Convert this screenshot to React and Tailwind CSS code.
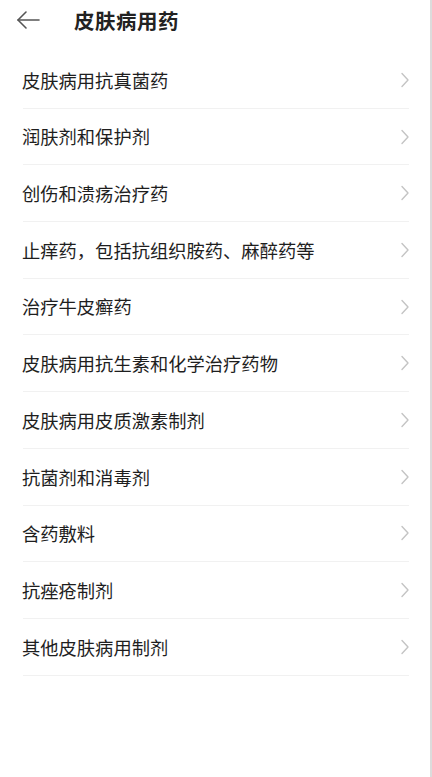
const items = [
  "皮肤病用抗真菌药",
  "润肤剂和保护剂",
  "创伤和溃疡治疗药",
  "止痒药，包括抗组织胺药、麻醉药等",
  "治疗牛皮癣药",
  "皮肤病用抗生素和化学治疗药物",
  "皮肤病用皮质激素制剂",
  "抗菌剂和消毒剂",
  "含药敷料",
  "抗痤疮制剂",
  "其他皮肤病用制剂",
];

const font = { fontFamily: '"Noto Sans CJK SC", "Noto Sans", sans-serif' };

export default function App() {
  return (
    <div
      className="h-[777px] w-[432px] overflow-hidden border-r-2 border-[#dcdcdc] bg-white text-[#222]"
      style={font}
    >
      <header className="flex h-[40px] items-center">
        <button className="ml-[15px] flex h-[26px] w-[26px] items-center justify-center text-[#555]">
          <svg width="24" height="24" viewBox="0 0 24 24" fill="none" stroke="currentColor" strokeWidth="1.6" strokeLinecap="round" strokeLinejoin="round">
            <path d="M23 12H2" />
            <path d="M10 4l-8 8 8 8" />
          </svg>
        </button>
        <h1 className="ml-[33px] text-[20.5px] font-bold leading-none tracking-[0.5px]">皮肤病用药</h1>
      </header>

      <ul className="ml-[23px] mr-[21px] mt-[12px]">
        {items.map((t) => (
          <li
            key={t}
            className="flex h-[56.7px] items-center justify-between border-b border-[#f1f1f1]"
          >
            <span className="-ml-[1px] text-[18.3px] font-normal leading-none text-[#1e1e1e]">{t}</span>
            <svg className="-mr-[1px]" width="10" height="16" viewBox="0 0 10 16" fill="none" stroke="#c4c4c4" strokeWidth="1.4" strokeLinecap="round" strokeLinejoin="round">
              <path d="M2 1.5l6 6.5-6 6.5" />
            </svg>
          </li>
        ))}
      </ul>
    </div>
  );
}
